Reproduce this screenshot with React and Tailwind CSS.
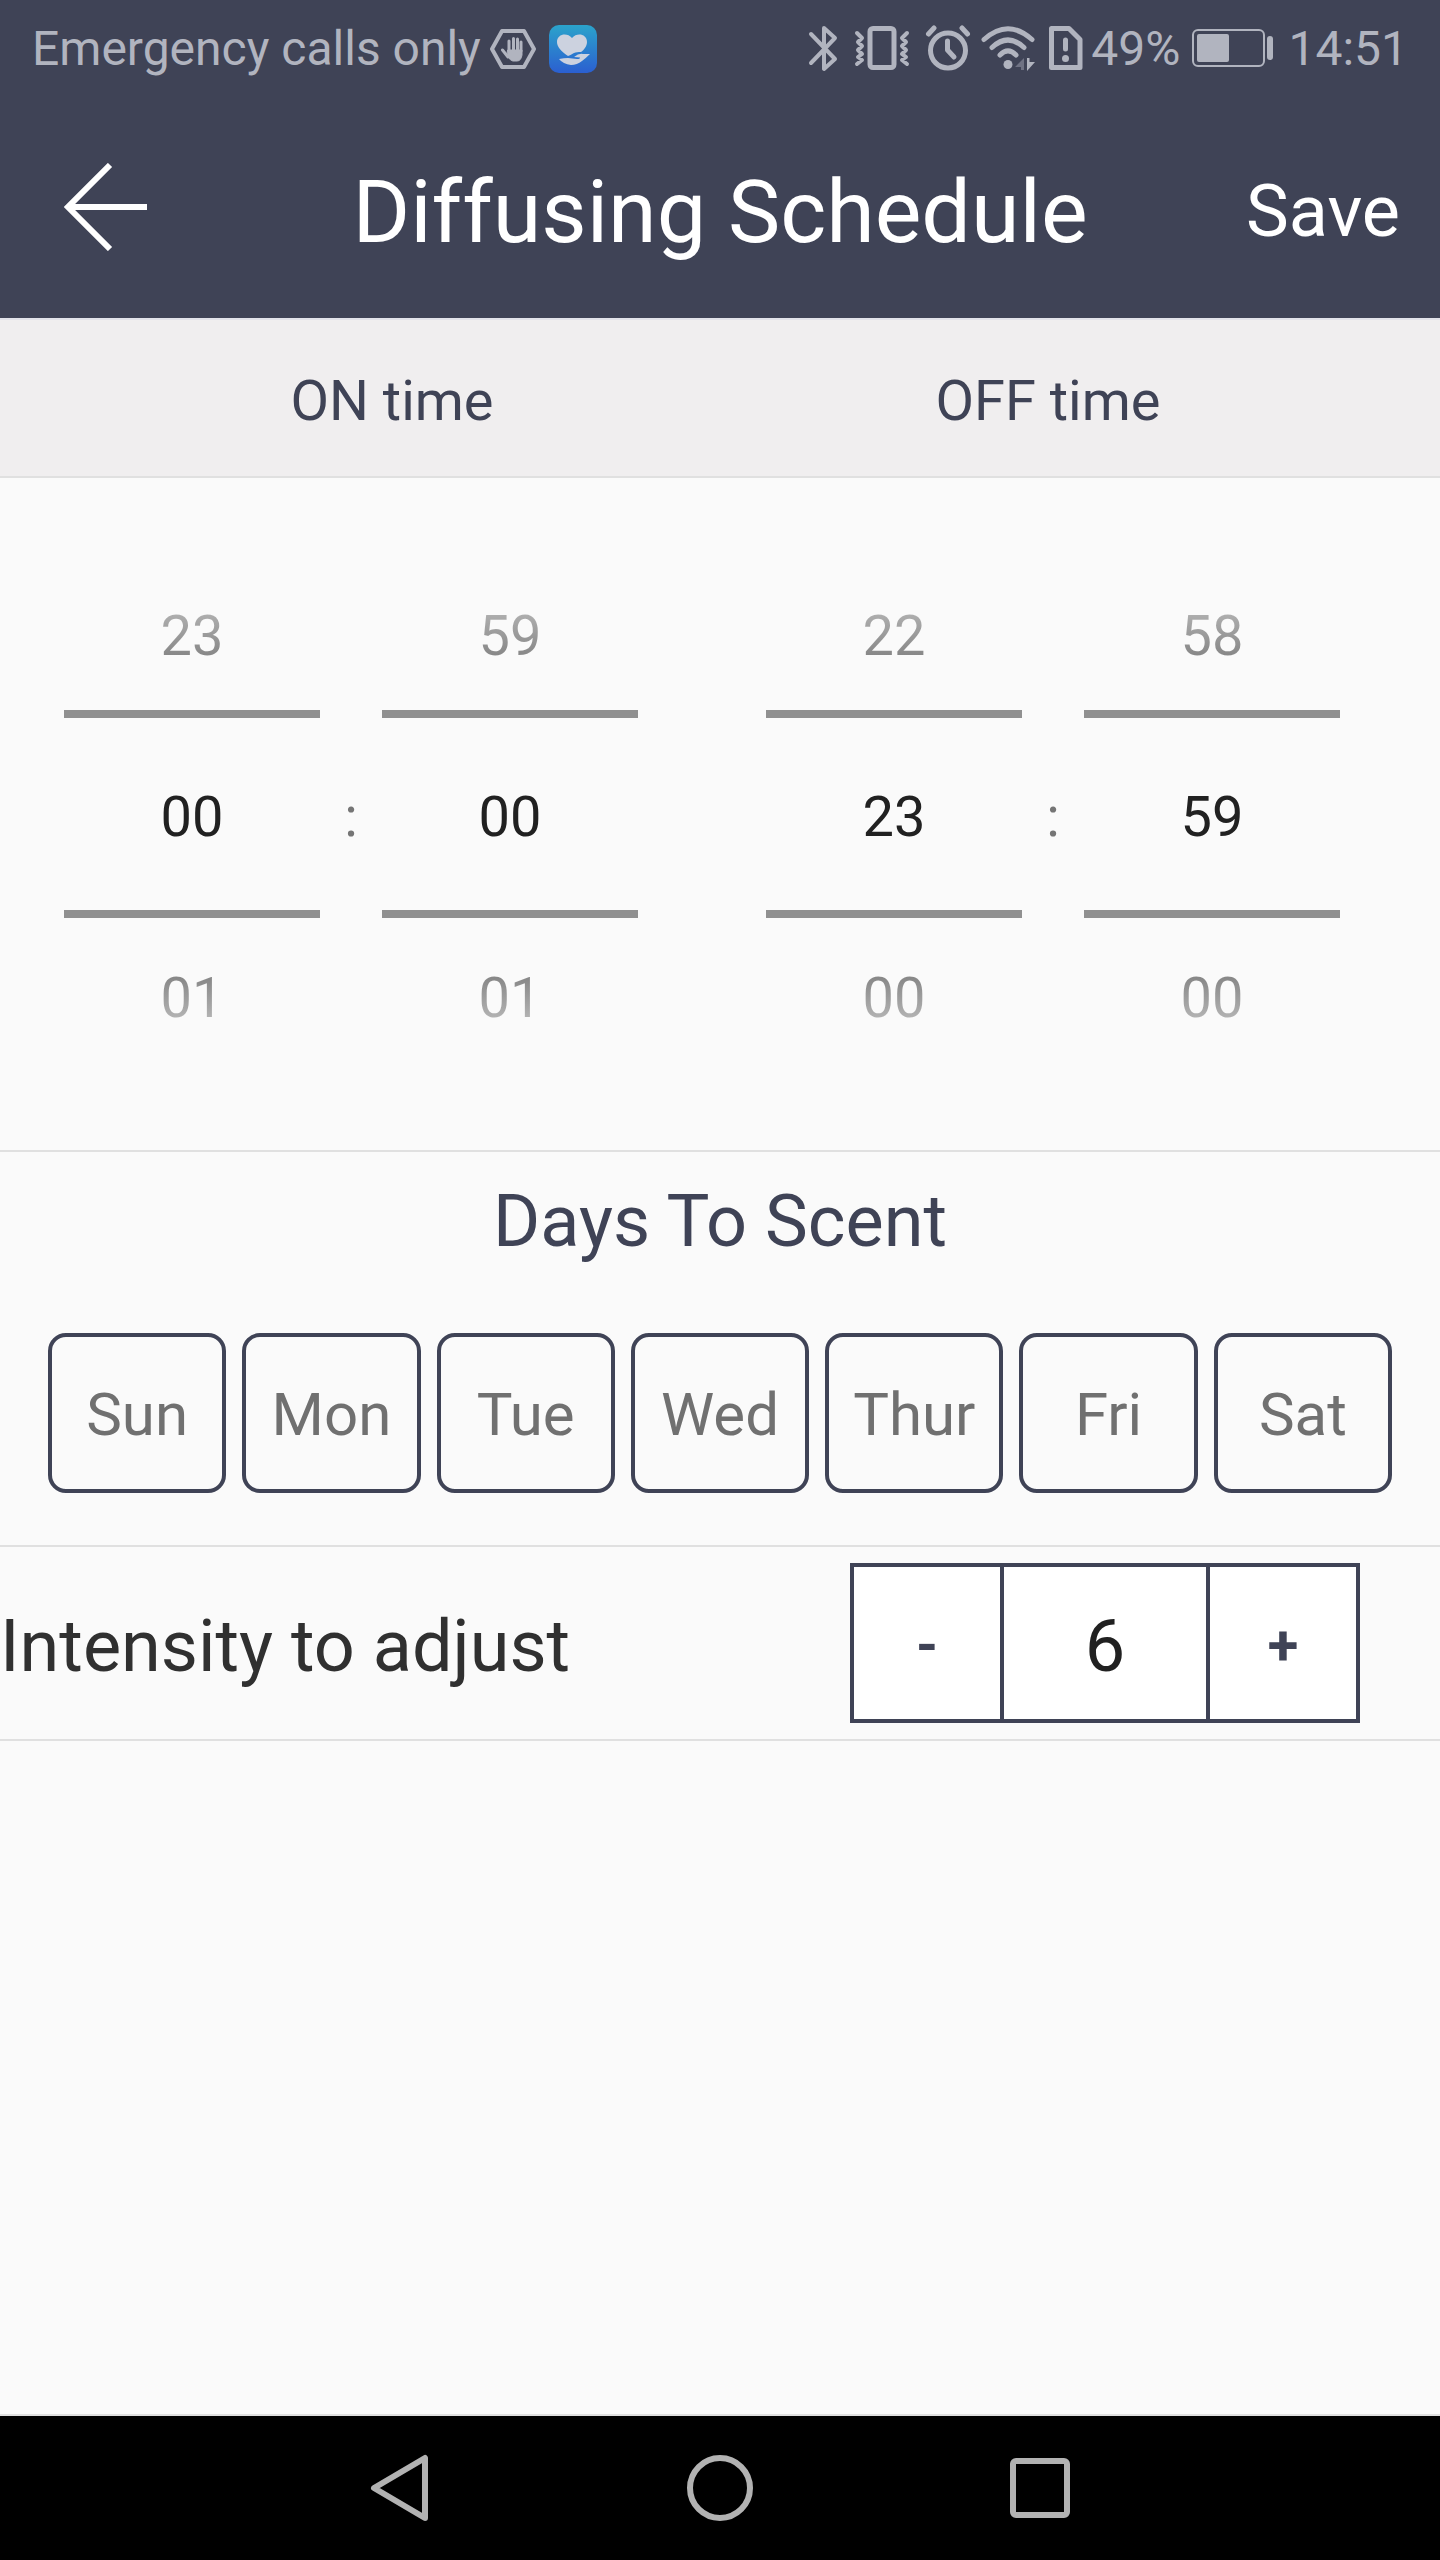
import { useState } from "react";

const DAYS = ["Sun", "Mon", "Tue", "Wed", "Thur", "Fri", "Sat"];

const pad = (n) => String(n).padStart(2, "0");

function StatusBar() {
  return (
    <div className="flex h-24 items-center justify-between bg-[#3f4356] px-8 pt-0.5 text-5xl text-[#b1b4bf]">
      <div className="flex items-center">
        <span>Emergency calls only</span>
        {/* blocked */}
        <svg className="ml-2 h-12 w-12" viewBox="0 0 48 48" fill="none" stroke="currentColor" strokeLinejoin="round" strokeLinecap="round">
          <path d="M13 6h22l10 18-10 18H13L3 24z" strokeWidth="4" />
          <path d="M20 27V16M24.500 25V13.500M28.500 25V14M32 26V17M19 32l-5.500-7" strokeWidth="3" />
          <path d="M19 25h14v5q-1 6-5 6h-4q-2 0-6-5z" fill="currentColor" strokeWidth="1" />
        </svg>
        {/* health app */}
        <svg className="ml-3 h-12 w-12" viewBox="0 0 48 48">
          <defs>
            <linearGradient id="health" x1="0" y1="0" x2="0" y2="1">
              <stop offset="0" stopColor="#2ba3cb" />
              <stop offset="1" stopColor="#2b5fd0" />
            </linearGradient>
          </defs>
          <rect width="48" height="48" rx="10" fill="url(#health)" />
          <path d="M19 31C12 26 8 22 8 17c0-8 10-10 15-4 5-6 15-4 15 4 0 4-3 8-6 10-3 0-5 0-7 1s-3 2-6 3z" fill="#ccd2df" />
          <path d="M10 34q5-1 9-1l9 1q3 0 3-1.500l-6-.5q5-4 9-3h7q-4 4-8 7-5 4-11 4-8-1-12-6z" fill="#ccd2df" />
        </svg>
      </div>

      <div className="flex items-center">
        {/* bluetooth */}
        <svg className="h-12 w-8" viewBox="0 0 32 48" fill="none" stroke="currentColor" strokeWidth="4" strokeLinejoin="round" strokeLinecap="round">
          <path d="M4 9l24 25-11 10V3l11 10L4 38" />
        </svg>
        {/* vibrate */}
        <svg className="ml-3.5 h-12 w-[58px]" viewBox="0 0 58 48" fill="none" stroke="currentColor" strokeLinejoin="round" strokeLinecap="round">
          <rect x="17" y="3.500" width="24" height="39" rx="3" strokeWidth="5" />
          <path d="M4 8l5 5-4 4 4 4-4 4 4 4-4 3 4 3-5 4M54 8l-5 5 4 4-4 4 4 4-4 4 4 3-4 3 5 4" strokeWidth="4" />
        </svg>
        {/* alarm */}
        <svg className="ml-3.5 h-12 w-12" viewBox="0 0 48 48" fill="none" stroke="currentColor" strokeWidth="5" strokeLinecap="round" strokeLinejoin="round">
          <circle cx="23" cy="25.500" r="17.500" />
          <path d="M22.500 16v9l6.500 7" />
          <path d="M3.500 9l5.500-6M42.500 9L37 3" />
        </svg>
        {/* wifi */}
        <svg className="ml-2 h-12 w-14" viewBox="0 0 56 48" fill="none" stroke="currentColor" strokeWidth="5" strokeLinecap="round">
          <path d="M3 14.500Q27-7 51 14.500M11 22.500q16-15 32 0M19 30q8-8 16 0" />
          <circle cx="27" cy="39.500" r="4.500" fill="currentColor" stroke="none" />
          <path d="M34 42l9-9v12h-3v-3z" fill="#6f7283" stroke="none" />
          <path d="M46 33h2.500v4H54l-8 9z" fill="currentColor" stroke="none" />
        </svg>
        {/* sim warning */}
        <svg className="ml-2.5 h-12 w-10" viewBox="0 0 40 48" fill="none" stroke="currentColor" strokeWidth="5" strokeLinecap="round" strokeLinejoin="round">
          <path d="M6 3.500h16l11 11v28H4.500v-39z" />
          <path d="M18.500 15v9" />
          <circle cx="18.500" cy="33.500" r="3.500" fill="currentColor" stroke="none" />
        </svg>
        <span className="ml-1">49%</span>
        {/* battery */}
        <svg className="ml-2 h-12 w-22" viewBox="0 0 88 48" fill="currentColor">
          <rect x="5" y="5" width="71" height="36" rx="5" fill="none" stroke="currentColor" strokeWidth="2" />
          <rect x="9" y="9" width="32" height="28" rx="2" />
          <rect x="79" y="11" width="6" height="24" rx="3" />
        </svg>
        <span className="ml-3">14:51</span>
      </div>
    </div>
  );
}

function Header() {
  return (
    <header className="grid h-56 grid-cols-[1fr_auto_1fr] items-center border-b-2 border-[#e2e3ea] bg-[#3f4356] px-10 text-white">
      <button type="button" aria-label="Back" className="justify-self-start pl-6">
        <svg className="h-22 w-21" viewBox="0 0 84 88" fill="none" stroke="currentColor" strokeWidth="6">
          <path d="M46 2L4 44l42 42M4 44h79" />
        </svg>
      </button>
      <h1 className="pt-2.5 text-[88px] leading-none">Diffusing Schedule</h1>
      <button type="button" className="justify-self-end pt-2.5 text-7xl">Save</button>
    </header>
  );
}

function Wheel({ label, value, max, onChange }) {
  const prev = (value + max - 1) % max;
  const next = (value + 1) % max;
  return (
    <div role="group" aria-label={label} className="flex flex-1 flex-col text-center text-[56px] leading-16">
      <button type="button" onClick={() => onChange(prev)} className="pb-[42px]">
        <span className="block bg-linear-to-b from-[#b8b8b8] to-[#7c7c7c] bg-clip-text text-transparent">{pad(prev)}</span>
      </button>
      <output className="block border-y-8 border-[#909090] pt-[67px] pb-[61px] text-[#212121]">{pad(value)}</output>
      <button type="button" onClick={() => onChange(next)} className="pt-12">
        <span className="block bg-linear-to-b from-[#7c7c7c] to-[#c0c0c0] bg-clip-text text-transparent">{pad(next)}</span>
      </button>
    </div>
  );
}

function TimePicker({ label, hour, minute }) {
  const [h, setH] = useState(hour);
  const [m, setM] = useState(minute);
  return (
    <div className="flex flex-1 items-center">
      <Wheel label={label + " hour"} value={h} max={24} onChange={setH} />
      <span className="w-[62px] text-center text-[56px] leading-16 text-[#757575]">:</span>
      <Wheel label={label + " minute"} value={m} max={60} onChange={setM} />
    </div>
  );
}

function NavBar() {
  return (
    <nav className="flex h-36 justify-center bg-black text-[#b2b2b2]">
      <div className="grid w-2/3 grid-cols-3 place-items-center">
        <button type="button" aria-label="Back">
          <svg className="h-18 w-18" viewBox="0 0 72 72" fill="none" stroke="currentColor" strokeWidth="6" strokeLinejoin="round">
            <path d="M61 6v60L10 36z" />
          </svg>
        </button>
        <button type="button" aria-label="Home">
          <svg className="h-18 w-18" viewBox="0 0 72 72" fill="none" stroke="currentColor" strokeWidth="6">
            <circle cx="36" cy="36" r="30" />
          </svg>
        </button>
        <button type="button" aria-label="Recents">
          <svg className="h-18 w-18" viewBox="0 0 72 72" fill="none" stroke="currentColor" strokeWidth="6">
            <rect x="9" y="9" width="54" height="54" rx="3" />
          </svg>
        </button>
      </div>
    </nav>
  );
}

export default function App() {
  const [days, setDays] = useState([]);
  const [intensity, setIntensity] = useState(6);

  const toggle = (day) =>
    setDays(days.includes(day) ? days.filter((d) => d !== day) : [...days, day]);

  return (
    <div className="flex min-h-screen flex-col bg-[#fafafa] font-[Roboto,sans-serif]">
      <StatusBar />
      <Header />

      <main className="flex flex-1 flex-col border-b-2 border-[#e0e0e0]">
        <div className="flex border-b-2 border-[#e0e0e0] bg-[#f0eeef] px-16 pt-[47px] pb-[41px] text-center text-[56px] leading-[68px] text-[#3f4356]">
          <h2 className="flex-1">ON time</h2>
          <h2 className="flex-1">OFF time</h2>
        </div>

        <section className="flex gap-32 border-b-2 border-[#e0e0e0] pt-[126px] pb-[120px] pl-16 pr-[100px]">
          <TimePicker label="ON" hour={0} minute={0} />
          <TimePicker label="OFF" hour={23} minute={59} />
        </section>

        <section className="border-b-2 border-[#e0e0e0] px-12 pt-[26px] pb-13">
          <h2 className="text-center text-7xl leading-[88px] text-[#3f4356]">Days To Scent</h2>
          <div className="mt-[67px] flex gap-4">
            {DAYS.map((day) => (
              <button
                key={day}
                type="button"
                aria-pressed={days.includes(day)}
                onClick={() => toggle(day)}
                className="h-40 flex-1 rounded-[18px] border-4 border-[#3f4356] pt-1 text-6xl text-[#707070] aria-pressed:bg-[#3f4356] aria-pressed:text-white"
              >
                {day}
              </button>
            ))}
          </div>
        </section>

        <section className="flex items-center justify-between border-b-2 border-[#e0e0e0] py-4 pr-20">
          <h2 className="pt-2 text-7xl text-[#303030]">Intensity to adjust</h2>
          <div className="flex h-40 border-4 border-[#3f4356] bg-white text-[56px] font-bold text-[#3f4356]">
            <button type="button" aria-label="Decrease" onClick={() => setIntensity(intensity - 1)} className="w-[146px] pt-1">-</button>
            <output className="flex w-[210px] items-center justify-center border-x-4 border-[#3f4356] pt-2 text-7xl font-normal text-[#212121]">
              {intensity}
            </output>
            <button type="button" aria-label="Increase" onClick={() => setIntensity(intensity + 1)} className="w-[146px] pt-1">+</button>
          </div>
        </section>
      </main>

      <NavBar />
    </div>
  );
}
